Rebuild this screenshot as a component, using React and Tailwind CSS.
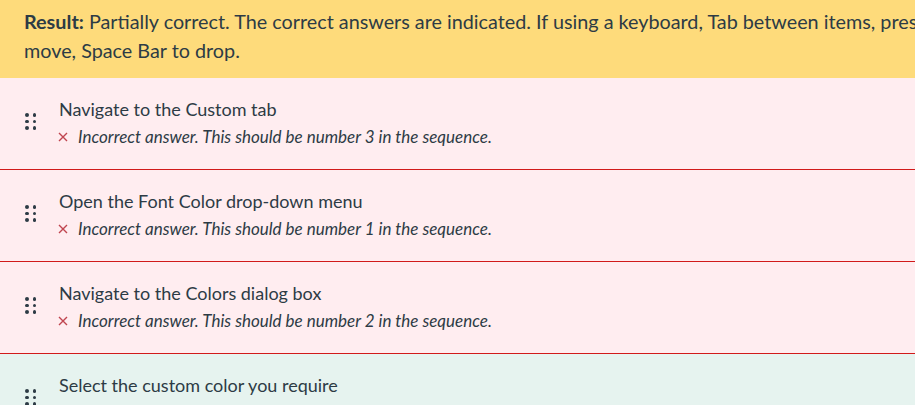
import React from 'react'

const items = [
  { text: 'Navigate to the Custom tab', status: 'wrong', n: 3 },
  { text: 'Open the Font Color drop-down menu', status: 'wrong', n: 1 },
  { text: 'Navigate to the Colors dialog box', status: 'wrong', n: 2 },
  { text: 'Select the custom color you require', status: 'right' },
]

function Grip() {
  return (
    <div className="grid grid-cols-2 content-start self-start gap-x-[4px] gap-y-[3px] w-[11px] mt-[35px] shrink-0">
      {[0, 1, 2, 3, 4, 5].map((i) => (
        <span key={i} className="block w-[3.5px] h-[3.5px] rounded-full bg-[#2d3b45]" />
      ))}
    </div>
  )
}

function Cross() {
  return (
    <svg width="10" height="10" viewBox="0 0 10 10" className="shrink-0">
      <path d="M1 1 L9 9 M9 1 L1 9" stroke="#c0454f" strokeWidth="1.4" />
    </svg>
  )
}

export default function App() {
  return (
    <div className="w-[915px] h-[405px] overflow-hidden bg-white font-['Lato','Open_Sans',sans-serif] text-[#2d3b45]">
      {/* Result banner */}
      <div className="bg-[#fedb7b] pl-6 pt-[7px] h-[78px] overflow-hidden whitespace-nowrap text-[19.8px] leading-[29px]">
        <div>
          <b className="font-bold">Result:</b> Partially correct. The correct answers are indicated. If using a keyboard, Tab between items, press
        </div>
        <div>move, Space Bar to drop.</div>
      </div>

      {/* Answers */}
      {items.map((it, i) => (
        <div
          key={i}
          className={
            'flex h-[92px] pl-[25px] border-b border-[#d11a1a] ' +
            (it.status === 'wrong' ? 'bg-[#ffedf0]' : 'bg-[#e6f3ef]')
          }
        >
          <Grip />
          <div className="pl-[23px] pt-[18px]">
            <div className="text-[18px] leading-[27px]">{it.text}</div>
            <div className="flex items-center gap-[10px] mt-[2px] text-[17px] leading-[24px] italic -ml-[1px]">
              {it.status === 'wrong' && (
                <>
                  <Cross />
                  <span>Incorrect answer. This should be number {it.n} in the sequence.</span>
                </>
              )}
            </div>
          </div>
        </div>
      ))}
    </div>
  )
}
